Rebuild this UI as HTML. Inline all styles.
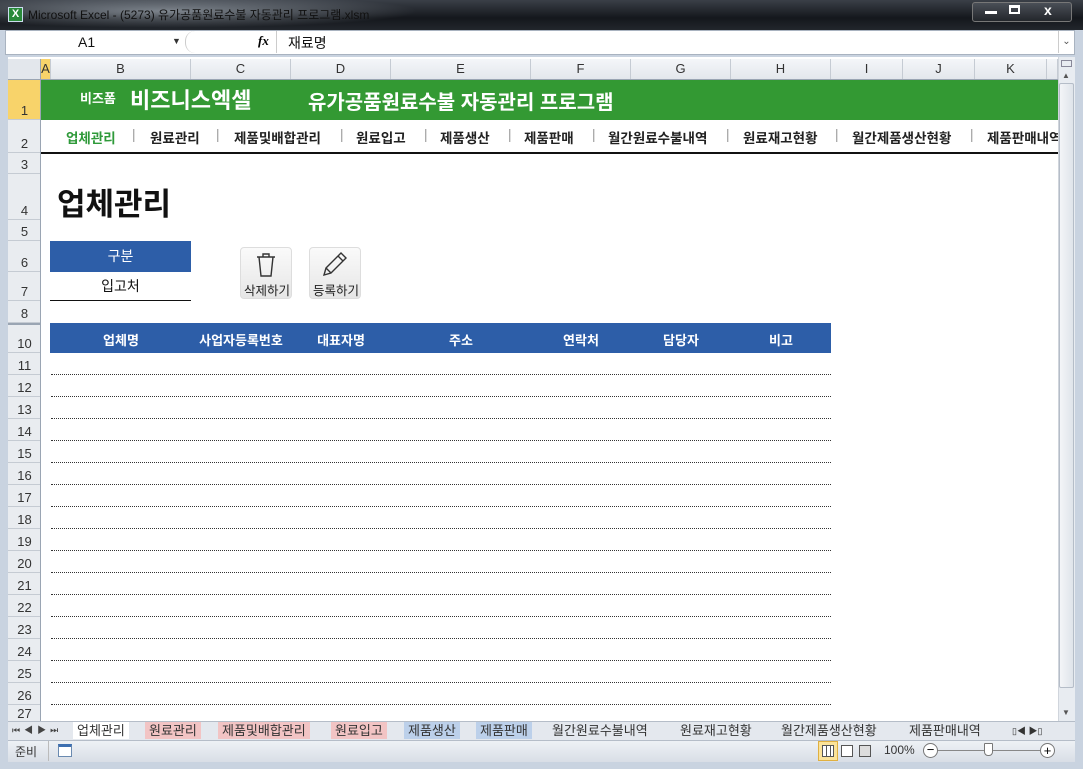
<!DOCTYPE html>
<html><head><meta charset="utf-8"><style>
*{margin:0;padding:0;box-sizing:border-box}
body{width:1083px;height:769px;overflow:hidden;background:#c9d3e0;font-family:"Liberation Sans","Noto Sans CJK KR",sans-serif;position:relative}
.a{position:absolute}
.k{font-family:"Liberation Sans","Noto Sans CJK KR",sans-serif}
.ch{position:absolute;top:59px;height:20px;border-right:1px solid #c5cbd3;font-size:13px;color:#333;text-align:center;line-height:20px;background:linear-gradient(#f4f6f9,#e3e7ec)}
.rh{position:absolute;left:8px;width:33px;border-bottom:1px solid #c5cbd3;font-size:13px;color:#333;text-align:center;background:#e9ecf0;display:flex;align-items:flex-end;justify-content:center;padding-bottom:1px}
.dl{position:absolute;left:51px;width:780px;border-bottom:1px dotted #333}
.nav{position:absolute;top:127px;font-size:13.5px;font-weight:bold;color:#222;white-space:nowrap}
.th{position:absolute;top:330px;font-size:13px;font-weight:bold;color:#fff;text-align:center}
.tab{position:absolute;top:722px;height:17px;font-size:13px;line-height:17px;color:#333;padding:0 4px}
</style></head><body>
<div class="a" style="left:0;top:0;width:1083px;height:30px;background:linear-gradient(#3a3f47,#14171c 60%,#22262c)"></div>
<div class="a" style="left:0;top:0;width:420px;height:28px;background:radial-gradient(ellipse at 40% 40%,rgba(200,210,220,.55),rgba(0,0,0,0) 70%)"></div>
<div class="a" style="left:8px;top:7px;width:15px;height:15px;background:#2a8a3a;border:1px solid #cde;color:#fff;font-size:11px;line-height:13px;text-align:center;font-weight:bold">X</div>
<div class="a k" style="left:28px;top:6px;font-size:12px;color:#111">Microsoft Excel - (5273) 유가공품원료수불 자동관리 프로그램.xlsm</div>
<div class="a" style="left:972px;top:2px;width:100px;height:20px;border:1px solid #777;border-radius:3px;background:linear-gradient(#4a4f57,#23262b)"></div>
<div class="a" style="left:985px;top:11px;width:12px;height:3px;background:#fff"></div>
<div class="a" style="left:1009px;top:5px;width:11px;height:9px;border:2px solid #fff;border-top-width:3px"></div>
<div class="a" style="left:1044px;top:2px;font-size:14px;color:#fff;font-weight:bold">x</div>
<div class="a" style="left:5px;top:30px;width:1070px;height:25px;background:#fff;border:1px solid #a9b3c0"></div>
<div class="a" style="left:78px;top:34px;font-size:14px;color:#111">A1</div>
<div class="a" style="left:172px;top:36px;font-size:9px;color:#333">▼</div>
<div class="a" style="left:185px;top:31px;width:92px;height:22px;border-left:1px solid #ccc;border-right:1px solid #ccc;border-radius:10px 0 0 10px"></div>
<div class="a" style="left:258px;top:33px;font-size:13px;font-style:italic;font-family:'Liberation Serif',serif;font-weight:bold">fx</div>
<div class="a" style="left:288px;top:33px;font-size:14px;color:#111">재료명</div>
<div class="a" style="left:1058px;top:31px;width:16px;height:22px;border-left:1px solid #ccc;font-size:10px;color:#555;text-align:center;line-height:22px">⌄</div>
<div class="a" style="left:8px;top:57px;width:1050px;height:665px;background:#fff"></div>
<div class="a" style="left:8px;top:59px;width:33px;height:20px;background:#e3e7ec;border-right:1px solid #c5cbd3"></div>
<div class="ch" style="left:41px;width:10px;background:#f8d36a;color:#333">A</div>
<div class="ch" style="left:51px;width:140px">B</div>
<div class="ch" style="left:191px;width:100px">C</div>
<div class="ch" style="left:291px;width:100px">D</div>
<div class="ch" style="left:391px;width:140px">E</div>
<div class="ch" style="left:531px;width:100px">F</div>
<div class="ch" style="left:631px;width:100px">G</div>
<div class="ch" style="left:731px;width:100px">H</div>
<div class="ch" style="left:831px;width:72px">I</div>
<div class="ch" style="left:903px;width:72px">J</div>
<div class="ch" style="left:975px;width:72px">K</div>
<div class="ch" style="left:1047px;width:11px"></div>
<div class="a" style="left:8px;top:79px;width:1050px;height:1px;background:#9aa5b3"></div>
<div class="rh" style="top:80px;height:40px;background:#f8d36a">1</div>
<div class="rh" style="top:120px;height:33px">2</div>
<div class="rh" style="top:153px;height:21px">3</div>
<div class="rh" style="top:174px;height:46px">4</div>
<div class="rh" style="top:220px;height:21px">5</div>
<div class="rh" style="top:241px;height:31px">6</div>
<div class="rh" style="top:272px;height:29px">7</div>
<div class="rh" style="top:301px;height:22px">8</div>
<div class="rh" style="top:323px;height:30px;border-top:2px solid #9aa5b3">10</div>
<div class="rh" style="top:353px;height:22px">11</div>
<div class="rh" style="top:375px;height:22px">12</div>
<div class="rh" style="top:397px;height:22px">13</div>
<div class="rh" style="top:419px;height:22px">14</div>
<div class="rh" style="top:441px;height:22px">15</div>
<div class="rh" style="top:463px;height:22px">16</div>
<div class="rh" style="top:485px;height:22px">17</div>
<div class="rh" style="top:507px;height:22px">18</div>
<div class="rh" style="top:529px;height:22px">19</div>
<div class="rh" style="top:551px;height:22px">20</div>
<div class="rh" style="top:573px;height:22px">21</div>
<div class="rh" style="top:595px;height:22px">22</div>
<div class="rh" style="top:617px;height:22px">23</div>
<div class="rh" style="top:639px;height:22px">24</div>
<div class="rh" style="top:661px;height:22px">25</div>
<div class="rh" style="top:683px;height:22px">26</div>
<div class="rh" style="top:705px;height:17px;border-bottom:none">27</div>
<div class="a" style="left:40px;top:59px;width:1px;height:663px;background:#9aa5b3"></div>
<div class="a" style="left:41px;top:80px;width:1017px;height:40px;background:#339933"></div>
<div class="a" style="left:80px;top:88px;font-size:13px;font-weight:bold;color:#fff">비즈폼</div>
<div class="a" style="left:130px;top:83px;font-size:22px;font-weight:bold;color:#fff">비즈니스엑셀</div>
<div class="a" style="left:308px;top:86px;font-size:20px;font-weight:bold;color:#fff;white-space:nowrap">유가공품원료수불 자동관리 프로그램</div>
<div class="nav" style="left:66px;color:#2f9a3a">업체관리</div>
<div class="nav" style="left:132px;color:#999;font-weight:normal">|</div>
<div class="nav" style="left:150px">원료관리</div>
<div class="nav" style="left:216px;color:#999;font-weight:normal">|</div>
<div class="nav" style="left:234px">제품및배합관리</div>
<div class="nav" style="left:340px;color:#999;font-weight:normal">|</div>
<div class="nav" style="left:356px">원료입고</div>
<div class="nav" style="left:424px;color:#999;font-weight:normal">|</div>
<div class="nav" style="left:440px">제품생산</div>
<div class="nav" style="left:508px;color:#999;font-weight:normal">|</div>
<div class="nav" style="left:524px">제품판매</div>
<div class="nav" style="left:592px;color:#999;font-weight:normal">|</div>
<div class="nav" style="left:608px">월간원료수불내역</div>
<div class="nav" style="left:726px;color:#999;font-weight:normal">|</div>
<div class="nav" style="left:743px">원료재고현황</div>
<div class="nav" style="left:835px;color:#999;font-weight:normal">|</div>
<div class="nav" style="left:852px">월간제품생산현황</div>
<div class="nav" style="left:970px;color:#999;font-weight:normal">|</div>
<div class="nav" style="left:987px;width:71px;overflow:hidden">제품판매내역</div>
<div class="a" style="left:41px;top:152px;width:1017px;height:2px;background:#111"></div>
<div class="a" style="left:57px;top:179px;font-size:31px;font-weight:bold;color:#111">업체관리</div>
<div class="a" style="left:50px;top:241px;width:141px;height:31px;background:#2d5ea8;color:#fff;font-size:14px;text-align:center;line-height:31px">구분</div>
<div class="a" style="left:50px;top:276px;width:141px;text-align:center;font-size:14px;color:#111">입고처</div>
<div class="a" style="left:50px;top:300px;width:141px;height:1px;background:#111"></div>
<div class="a" style="left:240px;top:247px;width:52px;height:52px;border:1px solid #ddd;border-radius:4px;background:linear-gradient(#fafafa,#e6e6e6)"></div>
<svg class="a" style="left:255px;top:252px" width="22" height="26" viewBox="0 0 22 26" fill="none" stroke="#333" stroke-width="1.4"><path d="M2 5h18M8 5V2h6v3M4 5l2 19h10l2-19"/></svg>
<div class="a" style="left:244px;top:280px;font-size:12.5px;color:#222">삭제하기</div>
<div class="a" style="left:309px;top:247px;width:52px;height:52px;border:1px solid #ddd;border-radius:4px;background:linear-gradient(#fafafa,#e6e6e6)"></div>
<svg class="a" style="left:322px;top:251px" width="26" height="26" viewBox="0 0 26 26" fill="none" stroke="#333" stroke-width="1.4"><path d="M19 2l5 5L9 22l-7 2 2-7z M16 5l5 5 M4 17l5 5"/></svg>
<div class="a" style="left:313px;top:280px;font-size:12.5px;color:#222">등록하기</div>
<div class="a" style="left:50px;top:323px;width:781px;height:30px;background:#2d5ea8"></div>
<div class="th" style="left:51px;width:140px">업체명</div>
<div class="th" style="left:191px;width:100px">사업자등록번호</div>
<div class="th" style="left:291px;width:100px">대표자명</div>
<div class="th" style="left:391px;width:140px">주소</div>
<div class="th" style="left:531px;width:100px">연락처</div>
<div class="th" style="left:631px;width:100px">담당자</div>
<div class="th" style="left:731px;width:100px">비고</div>
<div class="dl" style="top:374px"></div><div class="dl" style="top:396px"></div><div class="dl" style="top:418px"></div><div class="dl" style="top:440px"></div><div class="dl" style="top:462px"></div><div class="dl" style="top:484px"></div><div class="dl" style="top:506px"></div><div class="dl" style="top:528px"></div><div class="dl" style="top:550px"></div><div class="dl" style="top:572px"></div><div class="dl" style="top:594px"></div><div class="dl" style="top:616px"></div><div class="dl" style="top:638px"></div><div class="dl" style="top:660px"></div><div class="dl" style="top:682px"></div><div class="dl" style="top:704px"></div>
<div class="a" style="left:1058px;top:57px;width:17px;height:665px;background:#e8ecf1;border-left:1px solid #d0d5dc"></div>
<div class="a" style="left:1061px;top:60px;width:11px;height:7px;border:1px solid #889"></div>
<div class="a" style="left:1062px;top:71px;font-size:8px;color:#555">▲</div>
<div class="a" style="left:1059px;top:83px;width:15px;height:605px;background:linear-gradient(90deg,#f3f5f8,#dfe4ea);border:1px solid #b5bdc8;border-radius:2px"></div>
<div class="a" style="left:1062px;top:708px;font-size:8px;color:#555">▼</div>
<div class="a" style="left:1075px;top:30px;width:8px;height:739px;background:#c9d3e0"></div>
<div class="a" style="left:8px;top:721px;width:1067px;height:19px;background:#e4e8ee;border-top:1px solid #b5bdc8"></div>
<div class="a" style="left:12px;top:723px;font-size:9px;color:#444;letter-spacing:4px">⏮◀▶⏭</div>
<div class="tab" style="left:73px;background:#fff">업체관리</div>
<div class="tab" style="left:145px;background:#f2c4c4">원료관리</div>
<div class="tab" style="left:218px;background:#f2c4c4">제품및배합관리</div>
<div class="tab" style="left:331px;background:#f2c4c4">원료입고</div>
<div class="tab" style="left:404px;background:#bcd0ea">제품생산</div>
<div class="tab" style="left:476px;background:#bcd0ea">제품판매</div>
<div class="tab" style="left:548px">월간원료수불내역</div>
<div class="tab" style="left:676px">원료재고현황</div>
<div class="tab" style="left:777px">월간제품생산현황</div>
<div class="tab" style="left:905px">제품판매내역</div>
<div class="a" style="left:1012px;top:724px;font-size:9px;color:#333">▯◀ ▶▯</div>
<div class="a" style="left:8px;top:740px;width:1067px;height:22px;background:linear-gradient(#eef1f5,#d9dee6);border-top:1px solid #b5bdc8"></div>
<div class="a" style="left:15px;top:743px;font-size:12px;color:#333">준비</div>
<div class="a" style="left:48px;top:741px;width:1px;height:20px;background:#bbb"></div>
<div class="a" style="left:58px;top:744px;width:14px;height:13px;background:#fff;border:1px solid #6a8ab0;border-top:3px solid #3d6fb0"></div>
<div class="a" style="left:818px;top:741px;width:20px;height:20px;background:#fbe39a;border:1px solid #e0b040"></div>
<div class="a" style="left:822px;top:745px;width:12px;height:12px;border:1px solid #555;background:repeating-linear-gradient(90deg,#fff 0 3px,#555 3px 4px)"></div>
<div class="a" style="left:841px;top:745px;width:12px;height:12px;border:1px solid #555;background:#fff"></div>
<div class="a" style="left:859px;top:745px;width:12px;height:12px;border:1px solid #555;background:#ddd"></div>
<div class="a" style="left:884px;top:743px;font-size:12px;color:#333">100%</div>
<div class="a" style="left:923px;top:743px;width:15px;height:15px;border:1px solid #777;border-radius:50%;background:#fff;font-size:13px;line-height:12px;text-align:center">−</div>
<div class="a" style="left:938px;top:750px;width:102px;height:1px;background:#888"></div>
<div class="a" style="left:984px;top:743px;width:9px;height:13px;border:1px solid #777;background:#fff;border-radius:1px 1px 4px 4px"></div>
<div class="a" style="left:1040px;top:743px;width:15px;height:15px;border:1px solid #777;border-radius:50%;background:#fff;font-size:13px;line-height:13px;text-align:center">+</div>
<div class="a" style="left:0;top:763px;width:1083px;height:6px;background:#c9d3e0"></div>
</body></html>
